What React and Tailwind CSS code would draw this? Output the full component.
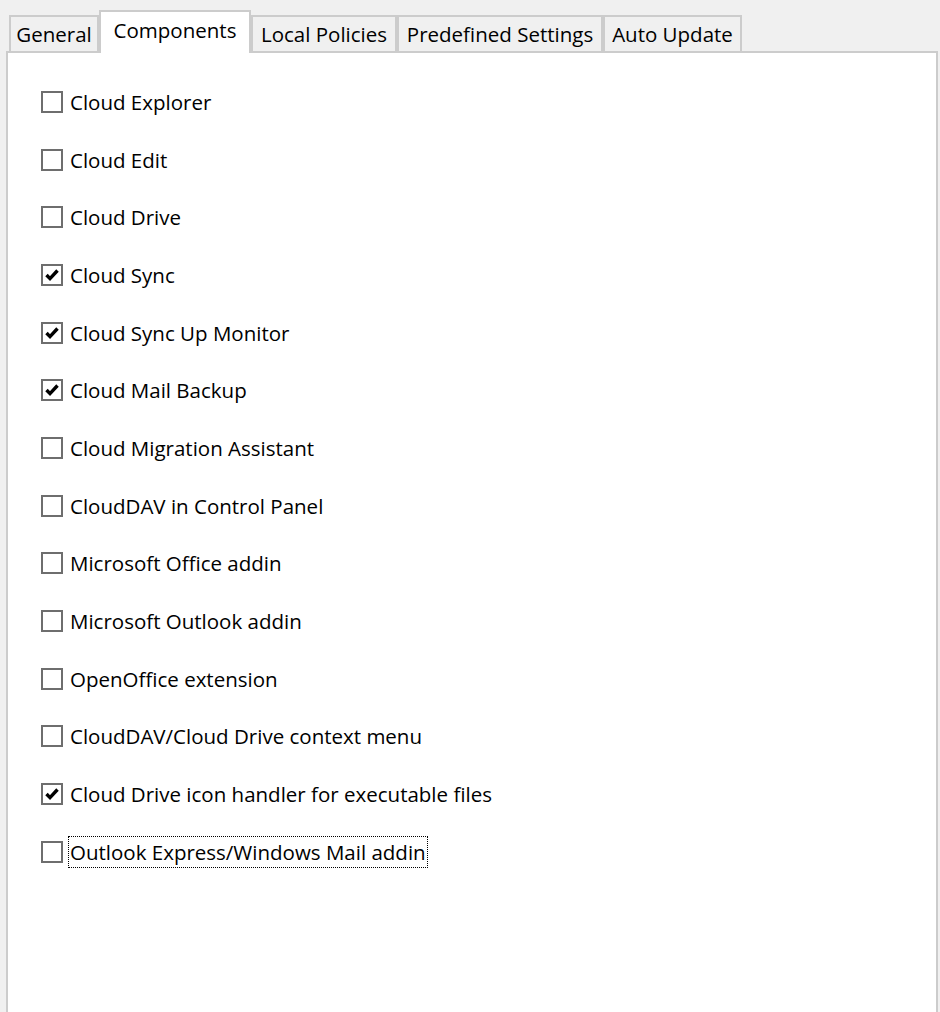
import React from "react";

const tabs = [
  { label: "General", w: "w-[90px]" },
  { label: "Components", w: "w-[152px]", active: true },
  { label: "Local Policies", w: "w-[146px]" },
  { label: "Predefined Settings", w: "w-[206px]" },
  { label: "Auto Update", w: "w-[139px]" },
];

const items = [
  ["Cloud Explorer", false],
  ["Cloud Edit", false],
  ["Cloud Drive", false],
  ["Cloud Sync", true],
  ["Cloud Sync Up Monitor", true],
  ["Cloud Mail Backup", true],
  ["Cloud Migration Assistant", false],
  ["CloudDAV in Control Panel", false],
  ["Microsoft Office addin", false],
  ["Microsoft Outlook addin", false],
  ["OpenOffice extension", false],
  ["CloudDAV/Cloud Drive context menu", false],
  ["Cloud Drive icon handler for executable files", true],
  ["Outlook Express/Windows Mail addin", false, true],
];

function CheckBox({ checked }) {
  return (
    <div className="w-[22px] h-[22px] border-2 border-[#6e6e6e] bg-white flex items-center justify-center shrink-0">
      {checked && (
        <svg width="16" height="16" viewBox="0 0 16 16">
          <path d="M2.5 8 L6 11.6 L13.5 3.5" fill="none" stroke="#000" strokeWidth="3.4" />
        </svg>
      )}
    </div>
  );
}

export default function App() {
  return (
    <div className="h-[1012px] bg-[#f0f0f0] flex flex-col overflow-hidden text-black" style={{ fontFamily: '"Open Sans", "Noto Sans", sans-serif' }}>
      {/* tab strip */}
      <div className="flex items-end pl-[9px] pt-[10px] relative z-10">
        {tabs.map((t) =>
          t.active ? (
            <div
              key={t.label}
              className={`${t.w} h-[43px] -mb-[2px] bg-white border-2 border-b-0 border-[#cccccc] flex justify-center pt-[3px] text-[20.5px]`}
            >
              {t.label}
            </div>
          ) : (
            <div
              key={t.label}
              className={`${t.w} h-[36px] bg-[#f0f0f0] border-2 border-b-0 border-[#cccccc] flex justify-center pt-[2px] text-[20.5px]`}
            >
              {t.label}
            </div>
          )
        )}
      </div>

      {/* panel */}
      <div className="flex-1 ml-[6px] mr-[2px] bg-white border-2 border-b-0 border-[#cccccc]">
        <div className="pt-[20px] pl-[33px]">
          {items.map(([label, checked, focused]) => (
            <div key={label} className="h-[57.7px] flex items-center gap-[6px]">
              <CheckBox checked={checked} />
              {focused ? (
                <span className="text-[20.5px] leading-[30px] px-[1px] outline-1 outline-dotted outline-black">{label}</span>
              ) : (
                <span className="text-[20.5px] leading-[30px] px-[1px]">{label}</span>
              )}
            </div>
          ))}
        </div>
      </div>
    </div>
  );
}
